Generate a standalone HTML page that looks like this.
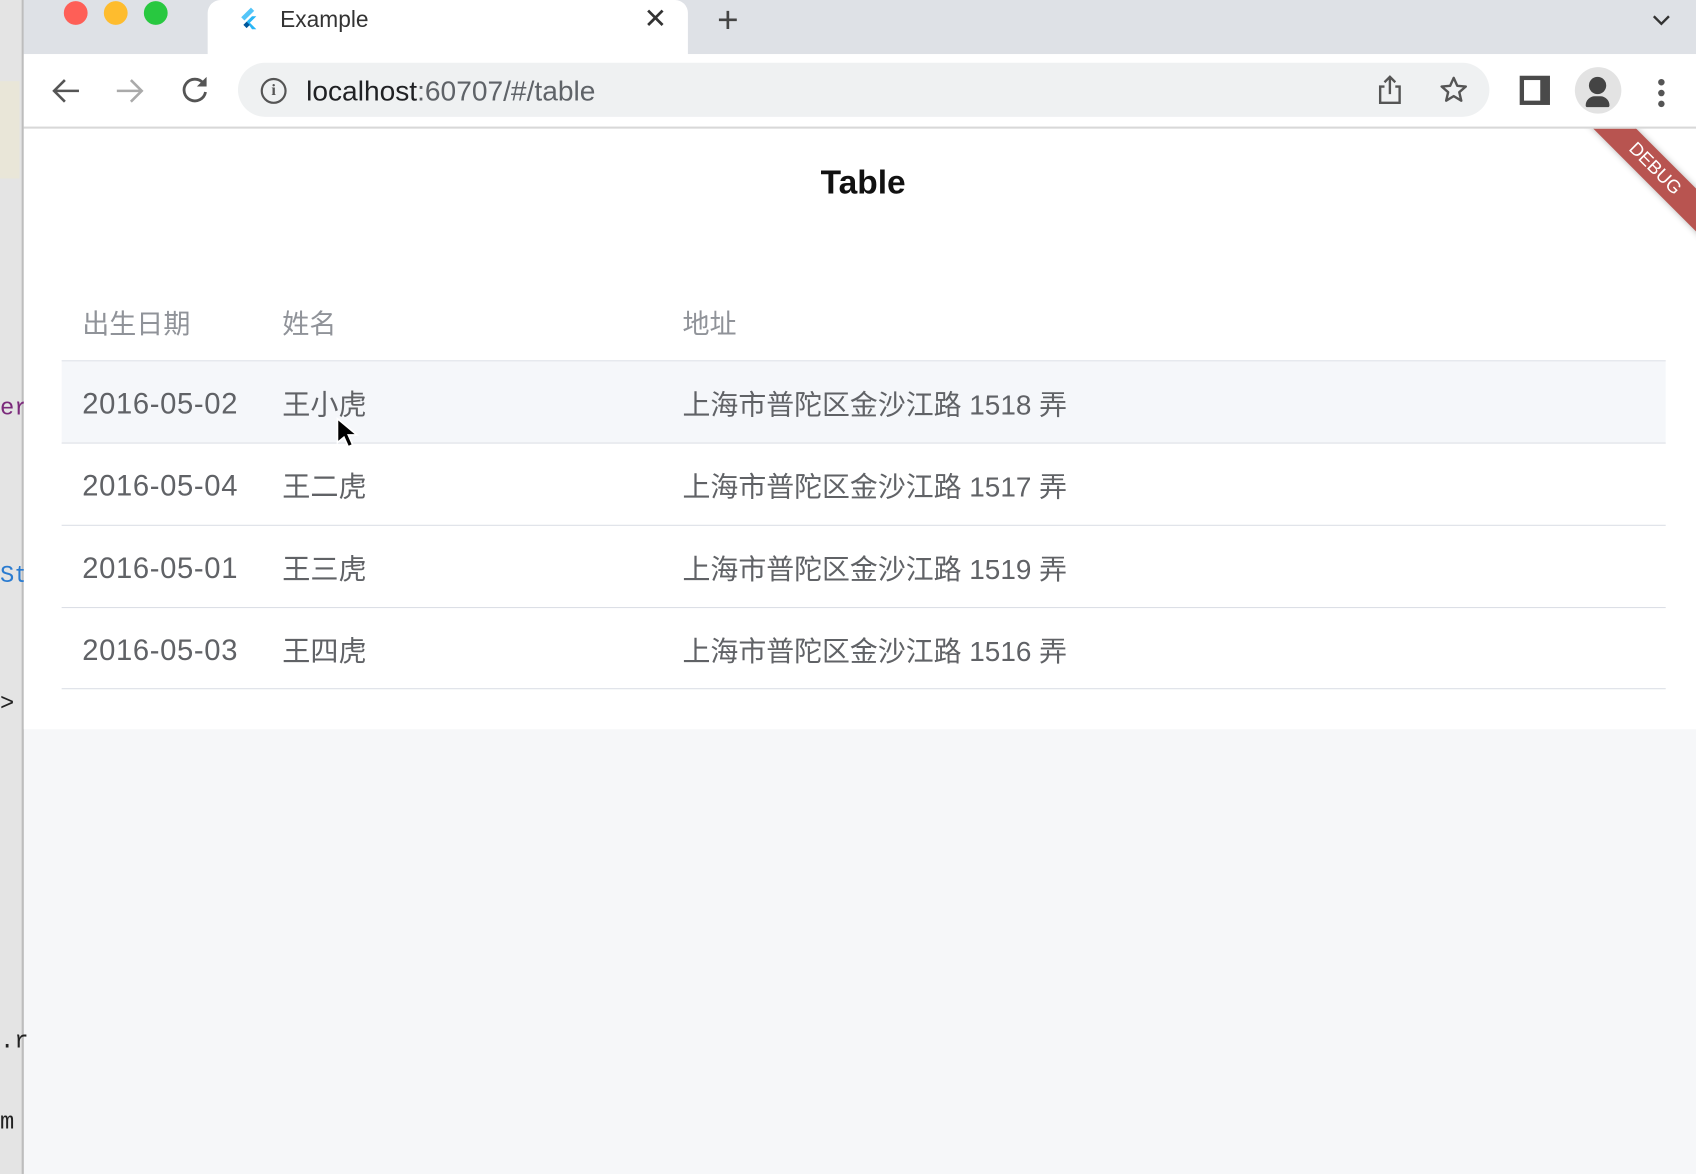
<!DOCTYPE html>
<html><head><meta charset="utf-8"><style>
html,body{margin:0;padding:0;overflow:hidden;width:1696px;height:1174px;background:#f6f7f9}
#w{position:absolute;left:0;top:0;width:1568px;height:1085px;transform:scale(1.08163,1.0820);transform-origin:0 0;font-family:"Liberation Sans","Noto Sans CJK SC",sans-serif;background:#f6f7f9}
.abs{position:absolute}
.cell{position:absolute;font-size:26px;color:#606266;white-space:nowrap}
.ad{position:absolute;font-size:25.8px;color:#606266;white-space:nowrap}
.dt{position:absolute;font-size:27px;letter-spacing:0.6px;color:#606266;white-space:nowrap}
.hd{position:absolute;font-size:25px;color:#909399}
.ln{position:absolute;left:57px;width:1483px;height:1px;background:#dcdfe6}
</style></head><body><div id="w">
<div class="abs" style="left:0;top:0;width:20px;height:1085px;background:#e4e4e4;border-right:2px solid #bdbdbd"></div>
<div class="abs" style="left:0;top:75px;width:18px;height:90px;background:#e9e6d8"></div>
<div class="abs" style="left:0;top:365px;font:22px 'Liberation Mono',monospace;color:#7b2a7b">er</div>
<div class="abs" style="left:0;top:520px;font:22px 'Liberation Mono',monospace;color:#2a7bd0">St</div>
<div class="abs" style="left:0;top:638px;font:22px 'Liberation Mono',monospace;color:#222">&gt;</div>
<div class="abs" style="left:0;top:950px;font:22px 'Liberation Mono',monospace;color:#222">.r</div>
<div class="abs" style="left:0;top:1025px;font:22px 'Liberation Mono',monospace;color:#222">m</div>
<div class="abs" style="left:22px;top:0;width:1546px;height:50px;background:#dee1e6"></div>
<div class="abs" style="left:59px;top:1px;width:22px;height:22px;border-radius:50%;background:#fe5f57"></div>
<div class="abs" style="left:96px;top:1px;width:22px;height:22px;border-radius:50%;background:#febc2e"></div>
<div class="abs" style="left:133px;top:1px;width:22px;height:22px;border-radius:50%;background:#28c840"></div>
<div class="abs" style="left:192px;top:0;width:444px;height:52px;background:#fff;border-radius:12px 12px 0 0"></div>
<svg class="abs" style="left:220px;top:6px" width="20" height="26" viewBox="0 0 20 26"><path d="M12 1L3 10l3 3L15 4z" fill="#54c5f8"/><path d="M8 14l5-5h4l-6 6 6 6h-4z" fill="#29b6f6"/><path d="M8 14l3 3-3 3-3-3z" fill="#01579b"/></svg>
<div class="abs" style="left:259px;top:7px;font-size:21px;color:#333">Example</div>
<div class="abs" style="left:595px;top:2px;font-size:26px;color:#333">✕</div>
<div class="abs" style="left:663px;top:0px;font-size:34px;color:#444;font-weight:300">+</div>
<svg class="abs" style="left:1526px;top:12px" width="20" height="14"><path d="M3 3l7 7 7-7" stroke="#333" stroke-width="2.2" fill="none"/></svg>
<div class="abs" style="left:22px;top:50px;width:1546px;height:67px;background:#fff"></div>
<svg class="abs" style="left:46px;top:70px" width="30" height="28"><path d="M27 14H4M14 4L4 14l10 10" stroke="#555" stroke-width="2.4" fill="none"/></svg>
<svg class="abs" style="left:105px;top:70px" width="30" height="28"><path d="M3 14h23M16 4l10 10-10 10" stroke="#aaa" stroke-width="2.4" fill="none"/></svg>
<svg class="abs" style="left:165px;top:68px" width="30" height="30"><path d="M23 9A10 10 0 1 0 25 17" stroke="#555" stroke-width="2.6" fill="none"/><path d="M26 3v9h-9z" fill="#555"/></svg>
<div class="abs" style="left:220px;top:58px;width:1157px;height:50px;border-radius:25px;background:#eff1f2"></div>
<div class="abs" style="left:241px;top:72px;width:24px;height:24px;border:2.4px solid #555;border-radius:50%;box-sizing:border-box;text-align:center;font:bold 15px 'Liberation Serif';color:#555;line-height:20px">i</div>
<div class="abs" style="left:283px;top:69px;font-size:26px;color:#202124">localhost<span style="color:#5f6368">:60707/#/table</span></div>
<svg class="abs" style="left:1272px;top:68px" width="26" height="30"><path d="M8 12H4v15h18V12h-4M13 19V3M8 8l5-5 5 5" stroke="#555" stroke-width="2.2" fill="none"/></svg>
<svg class="abs" style="left:1330px;top:69px" width="28" height="28" viewBox="0 0 24 24"><path d="M12 2.5l2.8 6.3 6.8.6-5.2 4.5 1.6 6.7L12 17l-6 3.6 1.6-6.7L2.4 9.4l6.8-.6z" stroke="#555" stroke-width="1.9" fill="none" stroke-linejoin="round"/></svg>
<div class="abs" style="left:1405px;top:70px;width:28px;height:27px;background:#4a4a4a"></div>
<div class="abs" style="left:1409px;top:74px;width:15px;height:19px;background:#fff"></div>
<div class="abs" style="left:1456px;top:62px;width:43px;height:43px;border-radius:50%;background:#e3e3e3"></div>
<div class="abs" style="left:1469px;top:71px;width:16px;height:16px;border-radius:50%;background:#444"></div>
<div class="abs" style="left:1466px;top:89px;width:22px;height:10px;border-radius:10px 10px 2px 2px;background:#444"></div>
<div class="abs" style="left:1533px;top:73px;width:6px;height:6px;border-radius:50%;background:#555;box-shadow:0 10px #555,0 20px #555"></div>
<div class="abs" style="left:22px;top:117px;width:1546px;height:2px;background:#d8d8d8"></div>
<div class="abs" style="left:22px;top:119px;width:1546px;height:555px;background:#fff;overflow:hidden">
 <div class="abs" style="left:1418px;top:23px;width:180px;height:28px;background:#b85450;transform:rotate(45deg);color:#fff;font-size:17px;text-align:center;line-height:28px;box-shadow:0 0 6px rgba(0,0,0,.3)">DEBUG</div>
 <div class="abs" style="left:0;width:1546px;top:32px;text-align:center;font-size:31px;font-weight:bold;color:#111"><span style="position:relative;left:3px">Table</span></div>
</div>
<div class="hd" style="left:76px;top:280px">出生日期</div>
<div class="hd" style="left:261px;top:280px">姓名</div>
<div class="hd" style="left:631px;top:280px">地址</div>
<div class="ln" style="top:333px"></div>
<div class="abs" style="left:57px;top:334px;width:1483px;height:75px;background:#f5f7fa"></div>
<div class="ln" style="top:409px"></div>
<div class="ln" style="top:485px"></div>
<div class="ln" style="top:561px"></div>
<div class="ln" style="top:636px"></div>
<div class="dt" style="left:76px;top:358px">2016-05-02</div><div class="cell" style="left:261px;top:354px">王小虎</div><div class="ad" style="left:631px;top:354px">上海市普陀区金沙江路 1518 弄</div>
<div class="dt" style="left:76px;top:434px">2016-05-04</div><div class="cell" style="left:261px;top:430px">王二虎</div><div class="ad" style="left:631px;top:430px">上海市普陀区金沙江路 1517 弄</div>
<div class="dt" style="left:76px;top:510px">2016-05-01</div><div class="cell" style="left:261px;top:506px">王三虎</div><div class="ad" style="left:631px;top:506px">上海市普陀区金沙江路 1519 弄</div>
<div class="dt" style="left:76px;top:586px">2016-05-03</div><div class="cell" style="left:261px;top:582px">王四虎</div><div class="ad" style="left:631px;top:582px">上海市普陀区金沙江路 1516 弄</div>
<svg class="abs" style="left:310px;top:385px" width="22" height="32"><path d="M2 2v22l6-5 4 9 4-2-4-9h8z" fill="#000" stroke="#fff" stroke-width="1.5"/></svg>
</div></body></html>
